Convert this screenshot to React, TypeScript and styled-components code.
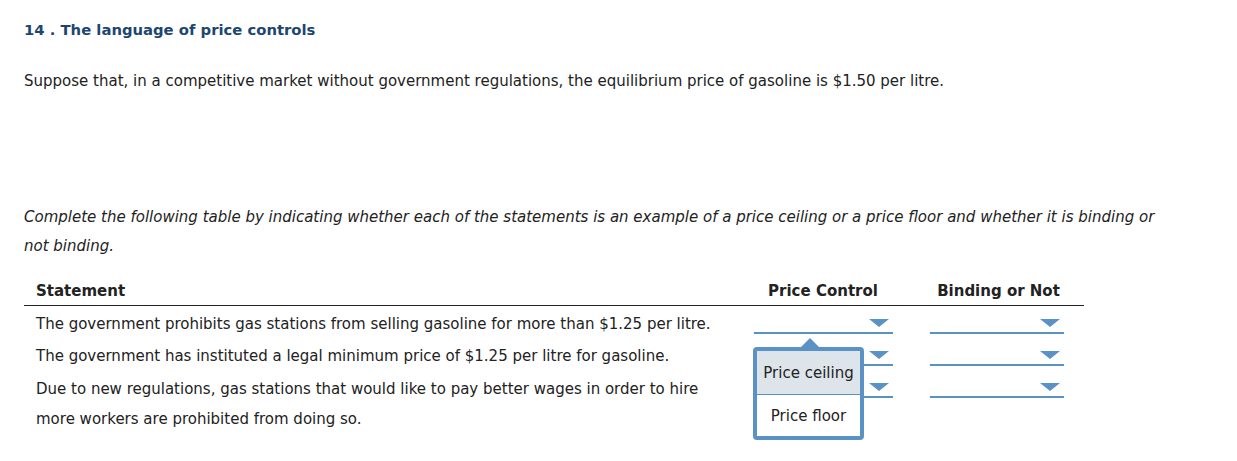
import React from 'react'
import styled, { createGlobalStyle } from 'styled-components'

const GlobalStyle = createGlobalStyle`
  html, body {
    margin: 0;
    padding: 0;
    background: #ffffff;
  }
  body {
    font-family: 'DejaVu Sans', Verdana, sans-serif;
    color: #222222;
  }
`

const Page = styled.div`
  padding: 20px 24px 0 24px;
  width: 1213px;
  min-height: 100vh;
  box-sizing: border-box;
`

const Title = styled.h2`
  margin: 0;
  font-size: 14.8px;
  font-weight: bold;
  color: #1c4670;
  line-height: 20px;
`

const Intro = styled.p`
  margin: 31px 0 0 0;
  font-size: 15px;
  line-height: 20px;
`

const Instructions = styled.p`
  margin: 112px 0 0 0;
  font-size: 15px;
  font-style: italic;
  line-height: 29px;
  max-width: 1145px;
`

const Table = styled.div`
  margin-top: 20px;
  width: 1060px;
  display: grid;
  grid-template-columns: 717px 164px 179px;
  font-size: 15px;
`

const HeadCell = styled.div<{ $align?: 'left' | 'center'; $shift?: number }>`
  font-weight: bold;
  padding: 0 0 4px ${({ $align, $shift }) => ($align === 'center' ? `${$shift || 0}px` : '12px')};
  text-align: ${({ $align }) => $align || 'left'};
  border-bottom: 1px solid #222222;
  line-height: 20px;
`

const StatementCell = styled.div<{ $tall?: boolean }>`
  padding: ${({ $tall }) => ($tall ? '4px 0 0 12px' : '8px 0 0 12px')};
  line-height: ${({ $tall }) => ($tall ? '30px' : '20px')};
  min-height: 24px;
`

const SelectCell = styled.div<{ $shift?: number }>`
  position: relative;
  display: flex;
  justify-content: center;
  padding-left: ${({ $shift }) => $shift || 0}px;
`

const Select = styled.div<{ $width: number }>`
  width: ${({ $width }) => $width}px;
  height: 26px;
  border-bottom: 2px solid #5b92c6;
  position: relative;
`

const Caret = styled.span`
  position: absolute;
  right: 4px;
  top: 13px;
  width: 0;
  height: 0;
  border-left: 10px solid transparent;
  border-right: 10px solid transparent;
  border-top: 8px solid #5b92c6;
`

const Menu = styled.div`
  position: absolute;
  top: 41px;
  left: 12px;
  width: 111px;
  box-sizing: border-box;
  border: 4px solid #5b92c6;
  border-radius: 4px;
  background: #ffffff;
  z-index: 5;

  &::before {
    content: '';
    position: absolute;
    top: -13px;
    left: 44px;
    border-left: 9px solid transparent;
    border-right: 9px solid transparent;
    border-bottom: 9px solid #5b92c6;
  }
`

const Option = styled.div<{ $highlight?: boolean }>`
  height: ${({ $highlight }) => ($highlight ? '43px' : '41px')};
  display: flex;
  align-items: center;
  justify-content: center;
  font-size: 15px;
  background: ${({ $highlight }) => ($highlight ? '#dde5eb' : '#ffffff')};
  border-bottom: ${({ $highlight }) => ($highlight ? '1px solid #5b92c6' : 'none')};
`

const rows = [
  { text: 'The government prohibits gas stations from selling gasoline for more than $1.25 per litre.' },
  { text: 'The government has instituted a legal minimum price of $1.25 per litre for gasoline.' },
  {
    text: 'Due to new regulations, gas stations that would like to pay better wages in order to hire more workers are prohibited from doing so.',
    tall: true,
  },
]

export default function App() {
  return (
    <>
      <GlobalStyle />
      <Page>
        <Title>14 . The language of price controls</Title>
        <Intro>
          Suppose that, in a competitive market without government regulations, the equilibrium price of gasoline is
          $1.50 per litre.
        </Intro>
        <Instructions>
          Complete the following table by indicating whether each of the statements is an example of a price ceiling or
          a price floor and whether it is binding or not binding.
        </Instructions>
        <Table>
          <HeadCell>Statement</HeadCell>
          <HeadCell $align="center">Price Control</HeadCell>
          <HeadCell $align="center" $shift={8}>
            Binding or Not
          </HeadCell>
          {rows.map((row, i) => (
            <React.Fragment key={i}>
              <StatementCell $tall={row.tall}>
                {row.tall ? (
                  <>
                    Due to new regulations, gas stations that would like to pay better wages in order to hire
                    <br />
                    more workers are prohibited from doing so.
                  </>
                ) : (
                  row.text
                )}
              </StatementCell>
              <SelectCell>
                <Select $width={139}>
                  <Caret />
                </Select>
                {i === 0 && (
                  <Menu>
                    <Option $highlight>Price ceiling</Option>
                    <Option>Price floor</Option>
                  </Menu>
                )}
              </SelectCell>
              <SelectCell $shift={4}>
                <Select $width={134}>
                  <Caret />
                </Select>
              </SelectCell>
            </React.Fragment>
          ))}
        </Table>
      </Page>
    </>
  )
}
